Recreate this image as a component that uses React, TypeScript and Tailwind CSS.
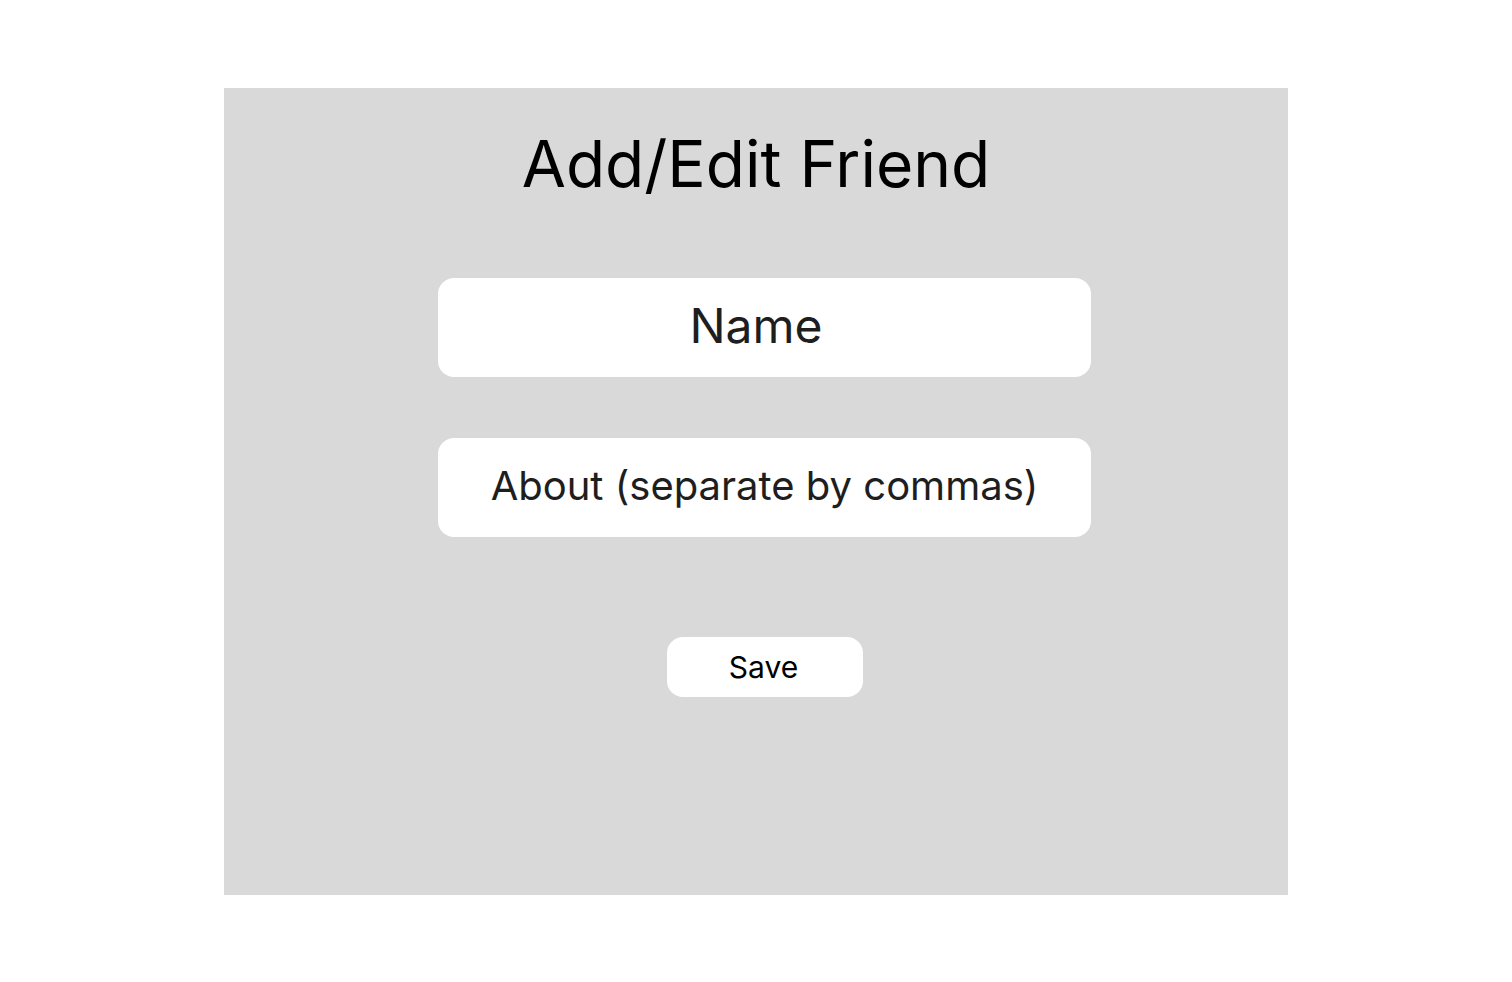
export default function App() {
  return (
    <div className="min-h-[982px] w-full bg-white pt-[88px] flex justify-center" style={{ fontFamily: "Inter, 'Noto Sans', sans-serif" }}>
      <div className="w-[1064px] h-[807px] bg-[#d9d9d9] flex flex-col items-center pt-[37px]">
        <h1 className="text-[64px] leading-[77px] text-black font-normal">Add/Edit Friend</h1>
        <div className="mt-[76px] w-[653px] h-[99px] ml-[17px] bg-white rounded-[16px] flex items-center justify-center pr-[17px] pb-[4px] text-[48px] text-[#1e1e1e]">
          Name
        </div>
        <div className="mt-[61px] w-[653px] h-[99px] ml-[17px] bg-white rounded-[16px] flex items-center justify-center pb-[4px] text-[40px] text-[#1e1e1e]">
          About (separate by commas)
        </div>
        <button className="mt-[100px] w-[196px] h-[60px] ml-[17px] bg-white rounded-[16px] flex items-center justify-center pr-[2px] text-[30px] text-black">
          Save
        </button>
      </div>
    </div>
  );
}
